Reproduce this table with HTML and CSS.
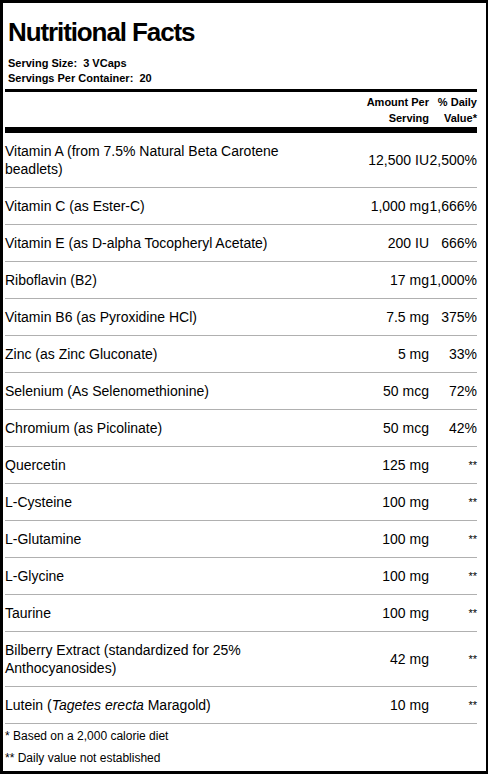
FILE: index.html
```html
<!DOCTYPE html>
<html>
    <head>
        <meta charset="UTF-8">
        <title>Nutritional Facts</title>
        <link rel="stylesheet" href="styles.css">
    </head>
    <body>
        <div class="label">
            <h1 class="label-title">Nutritional Facts</h1>
            <div class="label-serving">
                <p>Serving Size:&nbsp; 3 VCaps</p>
                <p>Servings Per Container:&nbsp; 20</p>
            </div>
            <table class="label-table">
                <colgroup>
                    <col class="col-name-width">
                    <col class="col-amount-width">
                    <col class="col-dv-width">
                </colgroup>
                <thead>
                    <tr>
                        <th class="col-name"></th>
                        <th class="col-amount">Amount Per<br>Serving</th>
                        <th class="col-dv">% Daily<br>Value*</th>
                    </tr>
                </thead>
                <tbody>
                    <tr>
                        <td class="col-name">Vitamin A (from 7.5% Natural Beta Carotene beadlets)</td>
                        <td class="col-amount">12,500 IU</td>
                        <td class="col-dv">2,500%</td>
                    </tr>
                    <tr>
                        <td class="col-name">Vitamin C (as Ester-C)</td>
                        <td class="col-amount">1,000 mg</td>
                        <td class="col-dv">1,666%</td>
                    </tr>
                    <tr>
                        <td class="col-name">Vitamin E (as D-alpha Tocopheryl Acetate)</td>
                        <td class="col-amount">200 IU</td>
                        <td class="col-dv">666%</td>
                    </tr>
                    <tr>
                        <td class="col-name">Riboflavin (B2)</td>
                        <td class="col-amount">17 mg</td>
                        <td class="col-dv">1,000%</td>
                    </tr>
                    <tr>
                        <td class="col-name">Vitamin B6 (as Pyroxidine HCl)</td>
                        <td class="col-amount">7.5 mg</td>
                        <td class="col-dv">375%</td>
                    </tr>
                    <tr>
                        <td class="col-name">Zinc (as Zinc Gluconate)</td>
                        <td class="col-amount">5 mg</td>
                        <td class="col-dv">33%</td>
                    </tr>
                    <tr>
                        <td class="col-name">Selenium (As Selenomethionine)</td>
                        <td class="col-amount">50 mcg</td>
                        <td class="col-dv">72%</td>
                    </tr>
                    <tr>
                        <td class="col-name">Chromium (as Picolinate)</td>
                        <td class="col-amount">50 mcg</td>
                        <td class="col-dv">42%</td>
                    </tr>
                    <tr>
                        <td class="col-name">Quercetin</td>
                        <td class="col-amount">125 mg</td>
                        <td class="col-dv is-star">**</td>
                    </tr>
                    <tr>
                        <td class="col-name">L-Cysteine</td>
                        <td class="col-amount">100 mg</td>
                        <td class="col-dv is-star">**</td>
                    </tr>
                    <tr>
                        <td class="col-name">L-Glutamine</td>
                        <td class="col-amount">100 mg</td>
                        <td class="col-dv is-star">**</td>
                    </tr>
                    <tr>
                        <td class="col-name">L-Glycine</td>
                        <td class="col-amount">100 mg</td>
                        <td class="col-dv is-star">**</td>
                    </tr>
                    <tr>
                        <td class="col-name">Taurine</td>
                        <td class="col-amount">100 mg</td>
                        <td class="col-dv is-star">**</td>
                    </tr>
                    <tr>
                        <td class="col-name">Bilberry Extract (standardized for 25% Anthocyanosides)</td>
                        <td class="col-amount">42 mg</td>
                        <td class="col-dv is-star">**</td>
                    </tr>
                    <tr>
                        <td class="col-name">Lutein (<em>Tagetes erecta</em> Maragold)</td>
                        <td class="col-amount">10 mg</td>
                        <td class="col-dv is-star">**</td>
                    </tr>
                </tbody>
            </table>
            <div class="label-notes">
                <p>* Based on a 2,000 calorie diet</p>
                <p>** Daily value not established</p>
            </div>
        </div>
    </body>
</html>
```

FILE: styles.css
```css
* {
    padding: 0;
    margin: 0;
    box-sizing: border-box;
}

html, body {
    height: 100%;
    width: 100%;
}

body {
    font-family: "Liberation Sans", Arial, sans-serif;
    color: #000;
    background-color: #fff;
}

.label {
    min-height: 100%;
    width: 100%;
    border: 3px solid #000;
    border-right-width: 2px;
    padding: 0 9px 0 2px;
}

.label-title {
    font-size: 26px;
    line-height: 30px;
    font-weight: bold;
    letter-spacing: -1.1px;
    padding: 14px 0 0 3px;
}

.label-serving {
    margin-top: 9px;
    padding: 0 0 3px 3px;
    border-bottom: 3px solid #000;
}

.label-serving p {
    font-size: 11px;
    line-height: 15px;
    font-weight: bold;
}

.label-table {
    width: 100%;
    table-layout: fixed;
    border-collapse: collapse;
    border-spacing: 0;
}

.col-name-width {
    width: 320px;
}

.col-dv-width {
    width: 48px;
}

.label-table th {
    font-size: 11px;
    line-height: 16px;
    font-weight: bold;
    text-align: right;
    padding: 2px 0 1px;
    border-bottom: 6px solid #000;
}

.label-table td {
    font-size: 14px;
    line-height: 18px;
    padding: 9px 0;
    vertical-align: middle;
    border-bottom: 1px solid #b0b0b0;
}

.label-table .col-name {
    text-align: left;
}

.label-table .col-amount,
.label-table .col-dv {
    text-align: right;
    white-space: nowrap;
}

.label-table .is-star {
    font-size: 11px;
}

.label-notes {
    padding: 1px 0 2px;
}

.label-notes p {
    font-size: 12px;
    line-height: 22px;
}
```
